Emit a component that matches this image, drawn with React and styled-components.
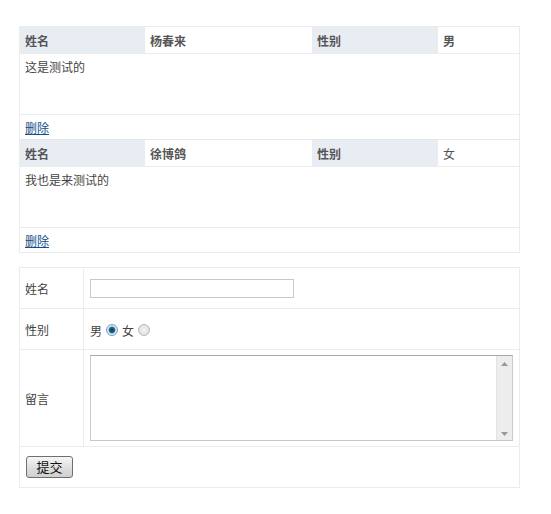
import React from "react";
import styled, { createGlobalStyle } from "styled-components";

const Global = createGlobalStyle`
  html, body { margin: 0; padding: 0; background: #fff; }
  *, *::before, *::after { box-sizing: border-box; }
  body {
    font-family: "Noto Sans CJK SC", "Liberation Sans", sans-serif;
    font-size: 12px;
    color: #444;
  }
`;

const Page = styled.div`
  padding: 26px 0 0 19px;
  width: 520px;
`;

const List = styled.div`
  border: 1px solid #ebebeb;
`;

const Record = styled.div`
  & + & { border-top: 1px solid #e6e6e6; }
`;

const HeadRow = styled.div`
  display: grid;
  grid-template-columns: 125px 167px 126px 1fr;
  height: 27px;
  border-bottom: 1px solid #ececec;
`;

const HeadCell = styled.div`
  display: flex;
  align-items: center;
  padding-left: 5px;
  font-weight: ${p => (p.$bold ? "bold" : "normal")};
  color: #555;
  background: ${p => (p.$label ? "#e8edf4" : "#fff")};
`;

const Body = styled.div`
  height: 61px;
  padding: 4px 5px 0;
  border-bottom: 1px solid #ececec;
  color: #444;
  line-height: 18px;
`;

const ActionRow = styled.div`
  height: 24px;
  display: flex;
  align-items: center;
  padding: 0 5px;
`;

const Link = styled.a`
  color: #134e88;
  text-decoration: underline;
  font-size: 12px;
  cursor: pointer;
`;

const Form = styled.div`
  margin-top: 14px;
  border: 1px solid #ebebeb;
`;

const FormRow = styled.div`
  display: grid;
  grid-template-columns: 64px 1fr;
  height: ${p => p.$h}px;
  border-bottom: 1px solid #ececec;
`;

const Label = styled.div`
  display: flex;
  align-items: center;
  padding-left: 5px;
  border-right: 1px solid #ececec;
  color: #444;
`;

const Field = styled.div`
  display: flex;
  align-items: center;
  padding-left: 6px;
  gap: 2px;
`;

const FullRow = styled.div`
  display: flex;
  align-items: center;
  padding-left: 6px;
  height: 40px;
`;

const TextInput = styled.input`
  width: 204px;
  height: 19px;
  border: 1px solid #c8c8c8;
  padding: 1px 3px;
  margin: 0;
  outline: none;
`;

const Radio = styled.span`
  display: inline-block;
  width: 12px;
  height: 12px;
  border-radius: 50%;
  border: 1px solid ${p => (p.$checked ? "#7a9fc2" : "#b9b9b9")};
  background: ${p =>
    p.$checked
      ? "radial-gradient(circle, #0d3c52 0, #1f6a84 2.8px, #cfe3f2 3.8px, #e8f1f8 100%)"
      : "radial-gradient(circle, #f4f4f4 0, #e4e4e4 60%, #d8d8d8 100%)"};
  margin: 2px 2px 0 2px;
`;

const RadioText = styled.span`
  color: #444;
  font-size: 12px;
  margin-top: 3px;
`;

const AreaWrap = styled.div`
  width: 423px;
  height: 86px;
  border: 1px solid #c9c9c9;
  border-top-color: #a8a8a8;
  display: flex;
`;

const Area = styled.textarea`
  flex: 1;
  border: none;
  resize: none;
  outline: none;
  overflow: hidden;
  margin: 0;
  padding: 2px;
  font-family: inherit;
`;

const Scrollbar = styled.div`
  width: 16px;
  background: #ededed;
  border-left: 1px solid #e2e2e2;
  display: flex;
  flex-direction: column;
  justify-content: space-between;
  align-items: center;
  padding: 6px 0 4px;
`;

const Button = styled.button`
  width: 47px;
  height: 22px;
  margin: 0;
  padding: 0;
  font-family: "Noto Sans CJK SC", sans-serif;
  font-size: 13px;
  color: #111;
  border: 1px solid #6f6f6f;
  border-radius: 3px;
  background: linear-gradient(#f6f6f6, #dedede 55%, #cfcfcf);
  line-height: 18px;
`;

const Arrow = ({ up }) => (
  <svg width="7" height="4" viewBox="0 0 7 4">
    <path d={up ? "M0 4 L3.5 0 L7 4 Z" : "M0 0 L3.5 4 L7 0 Z"} fill="#999" />
  </svg>
);

const records = [
  { name: "杨春来", sex: "男", boldSex: true, text: "这是测试的" },
  { name: "徐博鸽", sex: "女", boldSex: false, text: "我也是来测试的" },
];

export default function App() {
  return (
    <>
      <Global />
      <Page>
        <List>
          {records.map((r, i) => (
            <Record key={i}>
              <HeadRow>
                <HeadCell $label $bold>姓名</HeadCell>
                <HeadCell $bold>{r.name}</HeadCell>
                <HeadCell $label $bold>性别</HeadCell>
                <HeadCell $bold={r.boldSex}>{r.sex}</HeadCell>
              </HeadRow>
              <Body>{r.text}</Body>
              <ActionRow>
                <Link>删除</Link>
              </ActionRow>
            </Record>
          ))}
        </List>
        <Form>
          <FormRow $h={41}>
            <Label>姓名</Label>
            <Field>
              <TextInput type="text" />
            </Field>
          </FormRow>
          <FormRow $h={41}>
            <Label>性别</Label>
            <Field>
              <RadioText>男</RadioText>
              <Radio $checked />
              <RadioText>女</RadioText>
              <Radio />
            </Field>
          </FormRow>
          <FormRow $h={97}>
            <Label>留言</Label>
            <Field>
              <AreaWrap>
                <Area />
                <Scrollbar>
                  <Arrow up />
                  <Arrow />
                </Scrollbar>
              </AreaWrap>
            </Field>
          </FormRow>
          <FullRow>
            <Button>提交</Button>
          </FullRow>
        </Form>
      </Page>
    </>
  );
}
